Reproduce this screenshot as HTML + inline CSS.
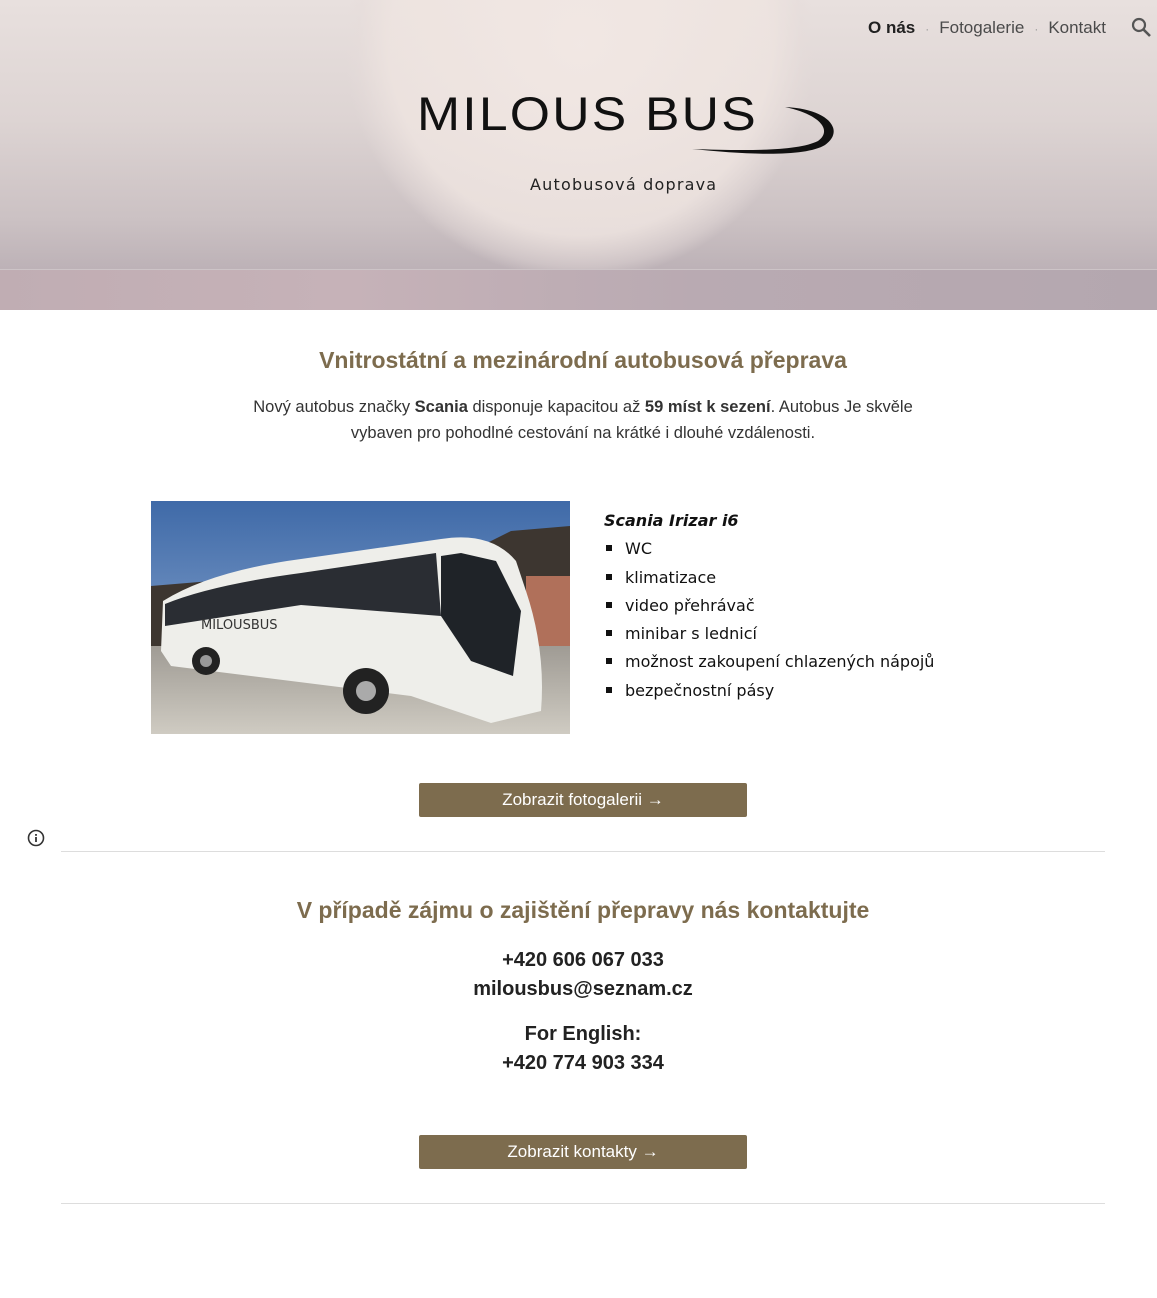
<!DOCTYPE html>
<html><head><meta charset="utf-8"><style>
*{margin:0;padding:0;box-sizing:border-box}
body{width:1157px;height:1298px;background:#fff;font-family:"Liberation Sans","DejaVu Sans",sans-serif;color:#212121;position:relative;overflow:hidden}
.hero{position:absolute;left:0;top:0;width:1157px;height:310px;
background:
radial-gradient(circle at 580px 45px,rgba(242,232,228,0.95) 0,rgba(238,228,224,0.85) 190px,rgba(230,220,218,0.4) 222px,rgba(220,210,210,0) 235px),
linear-gradient(180deg,#e8e0de 0,#ddd4d3 120px,#cbc1c3 220px,#bdb2b7 268px);}
.hero .sea{position:absolute;left:0;top:270px;width:100%;height:40px;background:linear-gradient(90deg,#c0adb3,#c6b2b8 30%,#b9aab2 60%,#b4a7af);}
.hero .hl{position:absolute;left:0;top:269px;width:100%;height:1px;background:#cdc4c7}
.nav{position:absolute;top:18px;left:868px;font-size:17px;color:#4a4a4a;font-family:"Liberation Sans",sans-serif;}
.nav b{color:#212121}
.nav .dot{color:#999;margin:0 10px;font-size:12px}
.logo{position:absolute;left:417px;top:86px;font-size:47px;letter-spacing:2px;color:#111;font-family:"Liberation Sans",sans-serif;transform:scaleX(1.1);transform-origin:left;white-space:nowrap}
.sub{position:absolute;left:530px;top:175px;font-size:16px;letter-spacing:1.2px;color:#222;font-family:"DejaVu Sans",sans-serif}
h2{position:absolute;width:1166px;text-align:center;color:#7d6c4e;font-size:23px;font-weight:bold;font-family:"Liberation Sans",sans-serif}
.p{position:absolute;left:0;width:1166px;text-align:center;font-size:16.5px;line-height:26px;color:#333;font-family:"Liberation Sans",sans-serif}
.list{position:absolute;left:604px;top:507px;font-family:"DejaVu Sans",sans-serif;font-size:16px;color:#111}
.list div{height:28.3px;line-height:28px}
.list .li::before{content:"";display:inline-block;width:6px;height:6px;background:#111;margin:0 13px 3px 2px}
.btn{position:absolute;left:419px;width:328px;height:34px;background:#7d6c4e;color:#fff;text-align:center;line-height:34px;font-size:17px;border-radius:2px;font-family:"Liberation Sans",sans-serif}
.hr{position:absolute;left:61px;width:1044px;height:1px;background:#ddd}
.c{position:absolute;width:1166px;text-align:center;font-weight:bold;font-size:20px;color:#222;font-family:"Liberation Sans",sans-serif}
</style></head><body>
<div class="hero"><div class="sea"></div><div class="hl"></div>
<div class="nav"><b>O nás</b><span class="dot">·</span>Fotogalerie<span class="dot">·</span>Kontakt</div>
<svg style="position:absolute;left:1131px;top:17px" width="22" height="22" viewBox="0 0 22 22"><circle cx="8" cy="8" r="6" fill="none" stroke="#555" stroke-width="2.2"/><path d="M12.5 12.5L19 19" stroke="#555" stroke-width="2.6"/></svg>
<div class="logo">MILOUS BUS</div>
<svg style="position:absolute;left:680px;top:103px" width="160" height="55" viewBox="0 0 160 55"><path d="M105 4 C150 6 165 28 145 42 C125 54 70 52 12 46 C70 48 118 48 138 38 C152 28 142 12 105 4Z" fill="#111"/></svg>
<div class="sub">Autobusová doprava</div>
</div>
<h2 style="top:347px">Vnitrostátní a mezinárodní autobusová přeprava</h2>
<div class="p" style="top:394px">Nový autobus značky <b>Scania</b> disponuje kapacitou až <b>59 míst k sezení</b>. Autobus Je skvěle<br>vybaven pro pohodlné cestování na krátké i dlouhé vzdálenosti.</div>
<svg style="position:absolute;left:151px;top:501px" width="419" height="233" viewBox="0 0 419 233">
<defs><linearGradient id="sky" x1="0" y1="0" x2="0" y2="1"><stop offset="0" stop-color="#3f6aa8"/><stop offset="1" stop-color="#9ab3d6"/></linearGradient>
<linearGradient id="gr" x1="0" y1="0" x2="0" y2="1"><stop offset="0" stop-color="#9f9b94"/><stop offset="1" stop-color="#cfcbc2"/></linearGradient></defs>
<rect width="419" height="233" fill="url(#sky)"/>
<path d="M0 85 L60 80 L120 90 L330 45 L360 30 L419 25 L419 130 L0 150Z" fill="#3d3630"/>
<rect x="375" y="75" width="44" height="70" fill="#b0705a"/>
<rect x="0" y="145" width="419" height="88" fill="url(#gr)"/>
<path d="M12 100 Q60 70 150 58 L290 38 Q340 30 365 60 L375 90 Q395 150 390 210 L340 222 L260 195 L20 165 L10 150Z" fill="#eeeeea"/>
<path d="M14 103 Q60 84 150 72 L285 52 L290 115 L150 104 L14 125Z" fill="#2a2d33"/>
<path d="M290 55 L310 52 L345 60 L370 110 L362 175 L320 160 L290 115Z" fill="#1f2328"/>
<circle cx="55" cy="160" r="14" fill="#222"/><circle cx="55" cy="160" r="6" fill="#999"/>
<circle cx="215" cy="190" r="23" fill="#222"/><circle cx="215" cy="190" r="10" fill="#aaa"/>
<text x="50" y="128" font-family="DejaVu Sans" font-size="13" fill="#333">MILOUSBUS</text>
</svg>
<div class="list"><div style="font-weight:bold;font-style:italic;">Scania Irizar i6</div>
<div class="li">WC</div><div class="li">klimatizace</div><div class="li">video přehrávač</div><div class="li">minibar s lednicí</div><div class="li">možnost zakoupení chlazených nápojů</div><div class="li">bezpečnostní pásy</div></div>
<div class="btn" style="top:783px">Zobrazit fotogalerii →</div>
<svg style="position:absolute;left:27px;top:829px" width="18" height="18" viewBox="0 0 18 18"><circle cx="9" cy="9" r="7.5" fill="none" stroke="#333" stroke-width="1.6"/><rect x="8.1" y="8" width="1.8" height="5" fill="#333"/><rect x="8.1" y="5" width="1.8" height="1.8" fill="#333"/></svg>
<div class="hr" style="top:851px"></div>
<h2 style="top:897px">V případě zájmu o zajištění přepravy nás kontaktujte</h2>
<div class="c" style="top:949px">+420 606 067 033</div>
<div class="c" style="top:978px">milousbus@seznam.cz</div>
<div class="c" style="top:1023px">For English:</div>
<div class="c" style="top:1052px">+420 774 903 334</div>
<div class="btn" style="top:1135px">Zobrazit kontakty →</div>
<div class="hr" style="top:1203px"></div>
</body></html>
